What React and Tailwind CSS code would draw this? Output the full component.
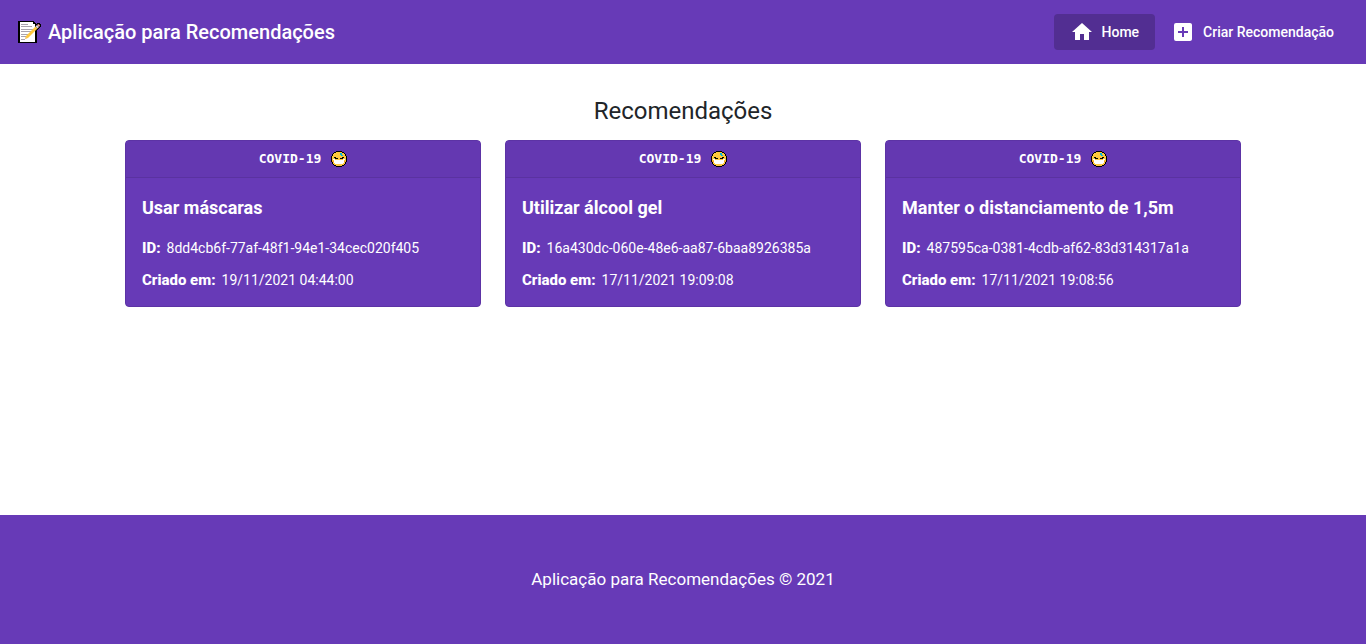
import { MdHome, MdAddBox } from "react-icons/md";

const recommendations = [
  { title: "Usar máscaras", id: "8dd4cb6f-77af-48f1-94e1-34cec020f405", created: "19/11/2021 04:44:00" },
  { title: "Utilizar álcool gel", id: "16a430dc-060e-48e6-aa87-6baa8926385a", created: "17/11/2021 19:09:08" },
  { title: "Manter o distanciamento de 1,5m", id: "487595ca-0381-4cdb-af62-83d314317a1a", created: "17/11/2021 19:08:56" },
];

function MemoIcon() {
  return (
    <svg viewBox="0 0 24 22" className="h-[22px] w-6 shrink-0" shapeRendering="crispEdges" aria-hidden="true">
      <path d="M0 0h16v1h1v1h1v1h1v19H0z" fill="#000" />
      <path d="M2 1h13v2h2v18H2z" fill="#fff" />
      <path d="M3 3h7v1H3zM3 5h11v1H3zM3 8h12v1H3zM3 10h10v1H3zM3 13h8v1H3zM3 15h6v1H3zM3 18h4v1H3z" fill="#a8a3ac" />
      <path d="M19 2h3v1h1v3h-1v1h-1v1h-1v1h-1V7h-2V4h1V3h1z" fill="#000" />
      <g shapeRendering="auto">
        <path d="M7 18l1-3L17.500 5.500l2 2L10 17z" fill="#ffc83d" />
        <path d="M17.500 5.500l1.500-1.500 2 2-1.500 1.500z" fill="#d6d2d8" />
        <path d="M19 4l1.500-1 1.500 1.500L21 6z" fill="#f4a099" />
        <path d="M7 18l1-2 1 1z" fill="#e8b98a" />
      </g>
    </svg>
  );
}

function MaskFaceIcon() {
  return (
    <svg viewBox="0 0 16 16" className="size-4 shrink-0" shapeRendering="crispEdges" aria-hidden="true">
      <path d="M5 0h6v1h2v1h1v1h1v2h1v6h-1v2h-1v1h-1v1h-2v1H5v-1H3v-1H2v-1H1v-2H0V5h1V3h1V2h1V1h2z" fill="#000" />
      <path d="M5 1h6v1h2v1h1v2h1v6h-1v2h-1v1h-2v1H5v-1H3v-1H2v-2H1V5h1V3h1V2h2z" fill="#ffc83d" />
      <path d="M9 2h2v2h1v1h-2V4H9z" fill="#00b4e4" />
      <path d="M3 6h2v1h2v1H4V7H3zM11 6h2v1h-1v1H9V7h2z" fill="#000" />
      <path d="M2 8h2v1h8V8h2v1h-1v3h-1v1H4v-1H3V9H2z" fill="#fff" />
      <path d="M1 10h2v1H1zM13 10h2v1h-2z" fill="#f2a02c" />
    </svg>
  );
}

function Card({ title, id, created }) {
  return (
    <article className="rounded border border-[#5c33a5] bg-[#673ab7] text-white">
      <div className="flex h-[37px] items-center justify-center gap-2.5 border-b border-[#5a32a0] bg-[#6438b1]">
        <span className="font-['DejaVu_Sans_Mono',monospace] text-[13px] font-bold">COVID-19</span>
        <MaskFaceIcon />
      </div>
      <div className="p-4">
        <h2 className="mb-4 text-lg leading-7 font-bold">{title}</h2>
        <dl className="flex flex-col gap-3 text-sm leading-5">
          <div className="flex gap-1.5">
            <dt className="text-[15px] font-extrabold">ID:</dt>
            <dd>{id}</dd>
          </div>
          <div className="flex gap-1.5">
            <dt className="text-[15px] font-extrabold">Criado em:</dt>
            <dd>{created}</dd>
          </div>
        </dl>
      </div>
    </article>
  );
}

export default function App() {
  return (
    <div className="flex min-h-screen flex-col bg-white font-['Roboto',sans-serif]">
      <header className="flex h-16 items-center justify-between bg-[#673ab7] px-4 text-white">
        <a href="#" className="flex items-center gap-1.5 pl-0.5 text-xl font-medium">
          <MemoIcon />
          Aplicação para Recomendações
        </a>
        <nav className="flex text-sm font-medium">
          <a href="#" aria-current="page" className="flex h-9 items-center gap-2 rounded bg-[#522e92] px-4">
            <MdHome className="size-6" />
            Home
          </a>
          <a href="#criar" className="flex h-9 items-center gap-2 rounded px-4">
            <MdAddBox className="size-6" />
            Criar Recomendação
          </a>
        </nav>
      </header>
      <main className="mx-auto w-full max-w-[1140px] grow px-3 pt-7">
        <h1 className="mb-2.5 text-center text-2xl leading-[38px] text-[#212529]">Recomendações</h1>
        <div className="grid grid-cols-1 gap-6 md:grid-cols-3">
          {recommendations.map((item) => (
            <Card key={item.id} {...item} />
          ))}
        </div>
      </main>
      <footer className="flex items-center justify-center bg-[#673ab7] px-4 py-12 text-[17px] leading-[33px] text-white">
        Aplicação para Recomendações © 2021
      </footer>
    </div>
  );
}
